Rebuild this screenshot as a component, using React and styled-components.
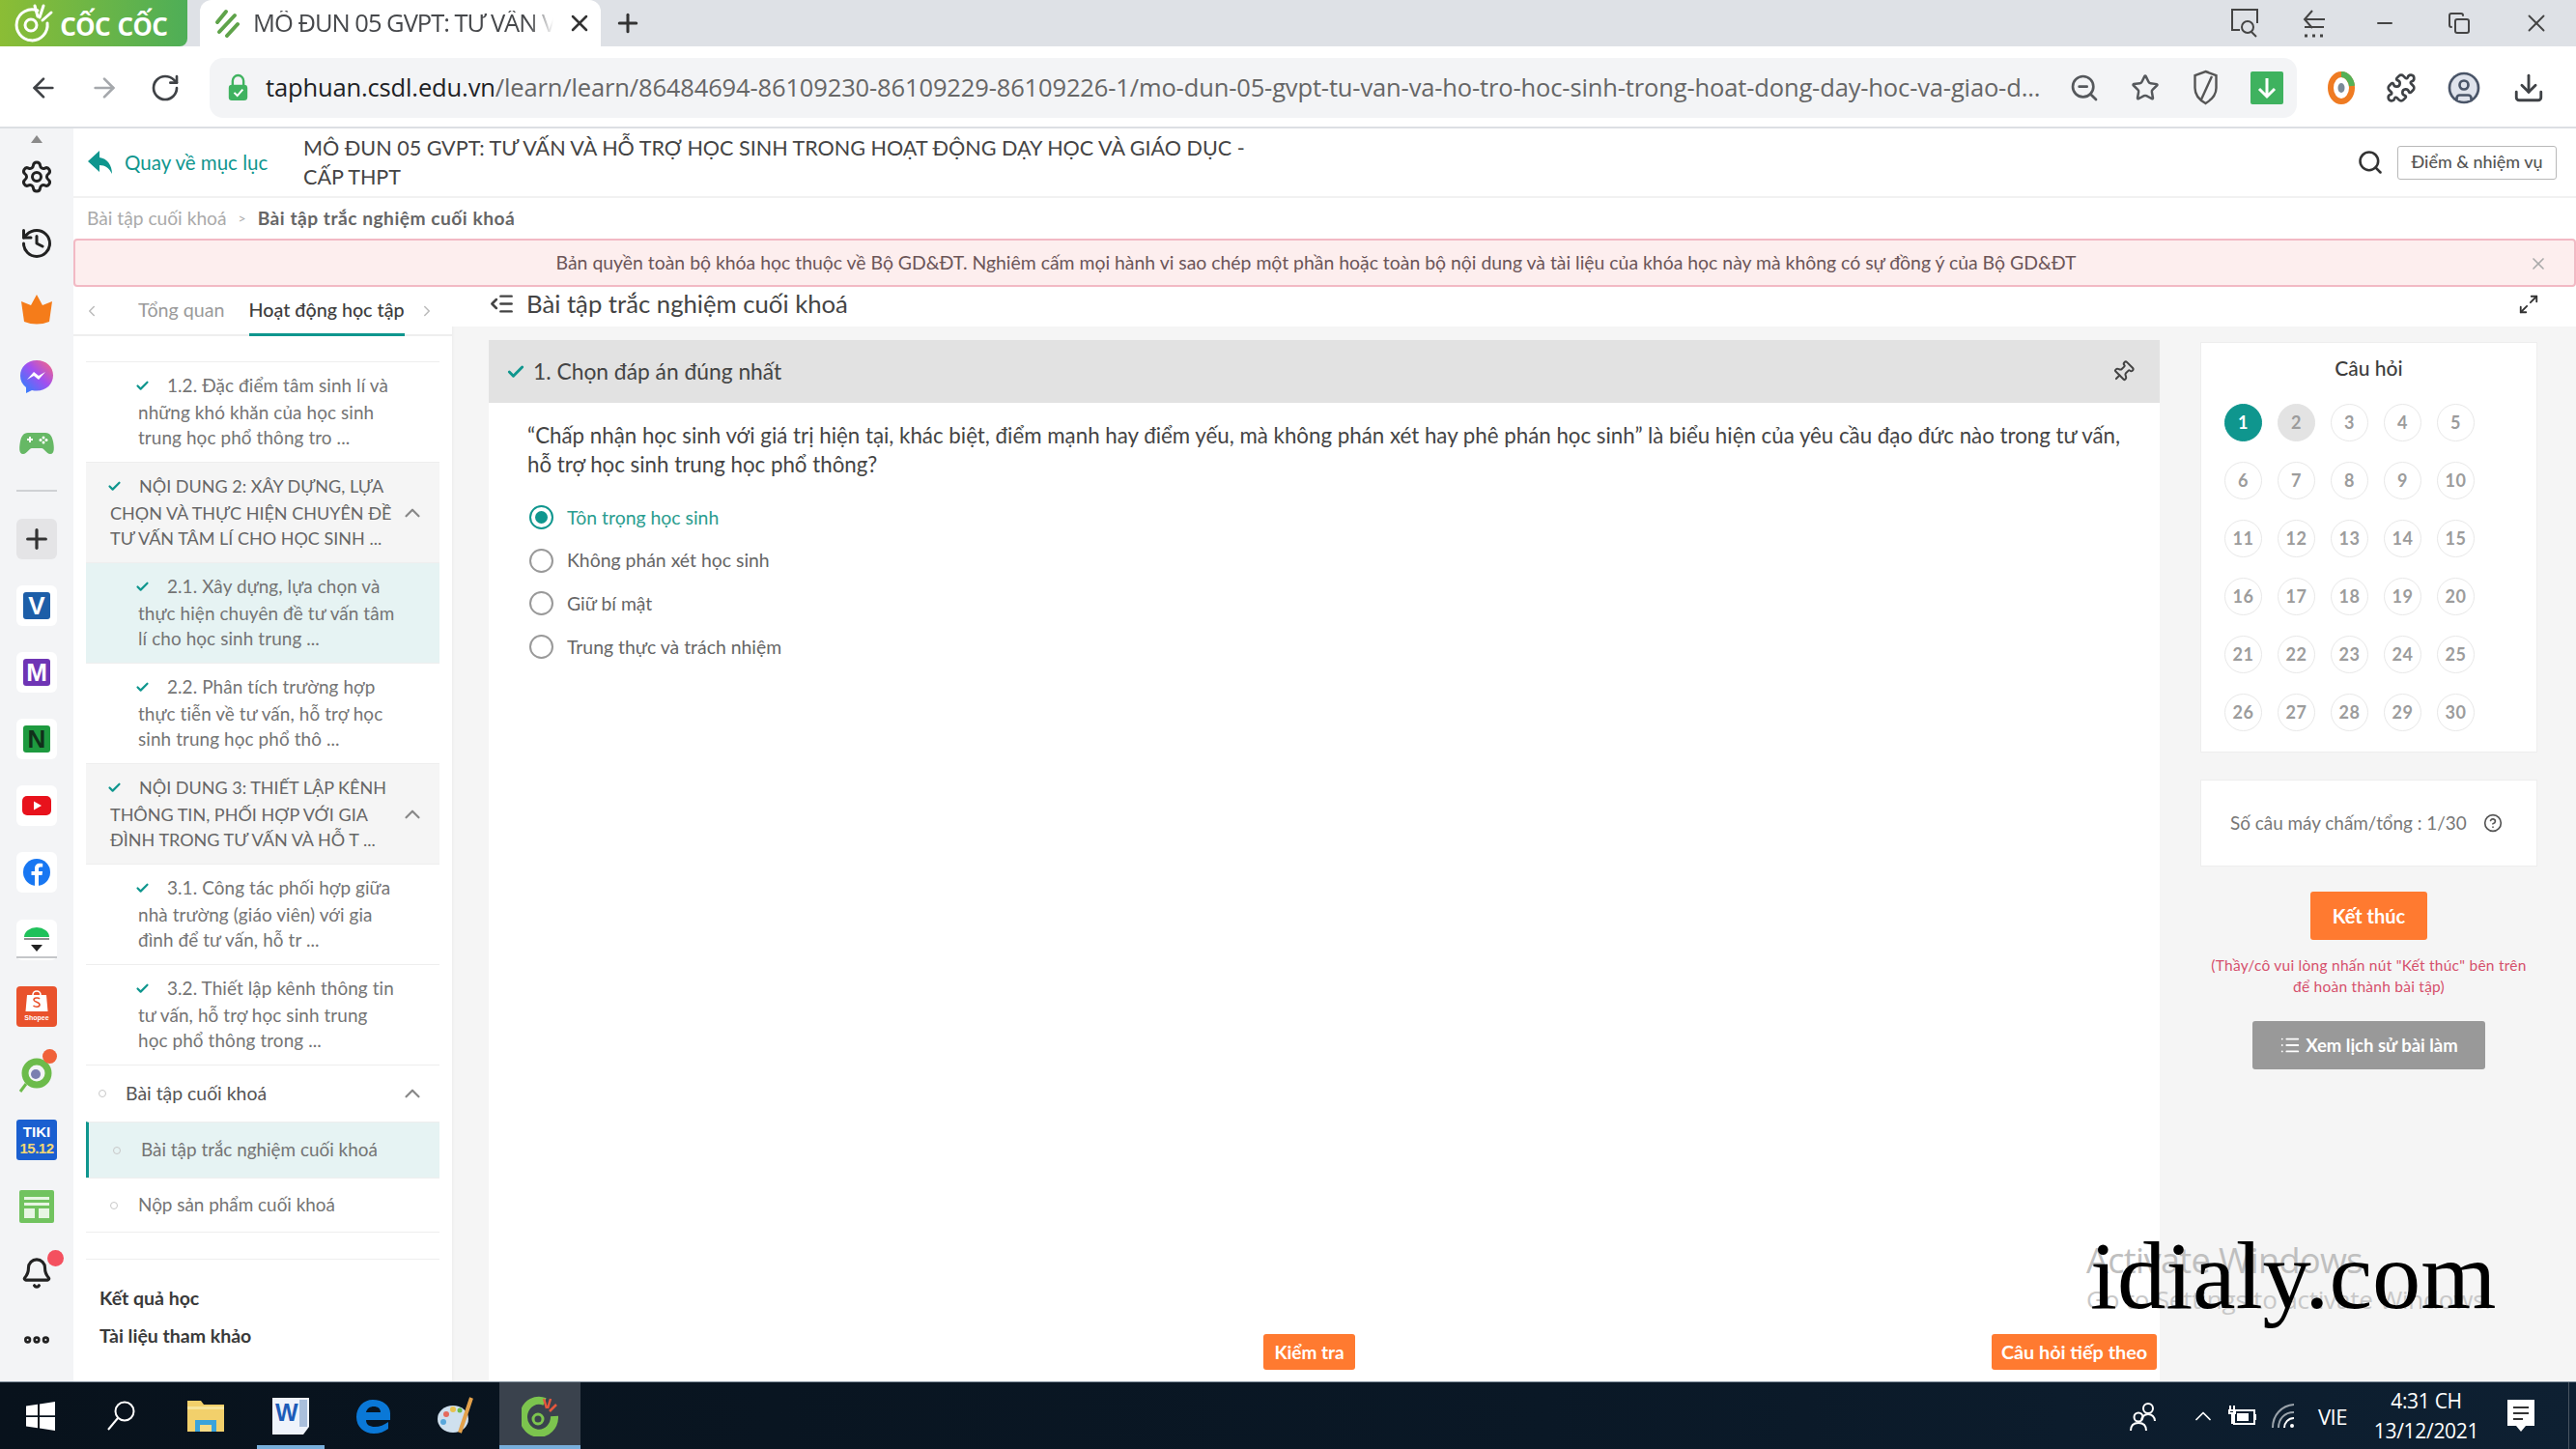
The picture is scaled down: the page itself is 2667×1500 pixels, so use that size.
import React from 'react';
import styled, { createGlobalStyle } from 'styled-components';
import { ArrowLeft, ArrowRight, RotateCw, ZoomOut, Star, Puzzle, CircleUser, Download, Settings, History, Plus, Search, Pin, Check, ChevronUp, ChevronLeft, ChevronRight, Maximize2, HelpCircle, X, Minus, Copy, IndentDecrease, List, MoreHorizontal, Bell } from 'lucide-react';

const UI = '"Lato","Open Sans","Noto Sans",sans-serif';
const CHROME = '"Open Sans","Noto Sans",sans-serif';
const TEAL = '#0f968e';

const Global = createGlobalStyle`
  html, body { margin: 0; padding: 0; background: #fff; }
  * { box-sizing: border-box; }
  body { font-family: ${UI}; color: #444; overflow: hidden; }
`;

const Screen = styled.div`
  position: relative; width: 2667px; height: 1500px; display: flex; flex-direction: column; overflow: hidden;
`;

/* browser chrome */
const TabBar = styled.div`
  height: 48px; flex: none; background: #dee1e6; display: flex; align-items: stretch; color: #3c4043;
`;
const Brand = styled.div`
  width: 194px; display: flex; align-items: center; gap: 6px; padding-left: 12px;
  background: linear-gradient(90deg, #8bbd35, #4eae57); border-radius: 0 0 8px 0;
  color: #fff; font: 600 34px/1 ${CHROME}; letter-spacing: -1px;
`;
const ActiveTab = styled.div`
  margin-left: 13px; width: 415px; background: #fff; border-radius: 12px 12px 0 0; display: flex; align-items: center; padding-left: 15px; position: relative;
`;
const TabTitle = styled.span`
  margin-left: 14px; width: 311px; white-space: nowrap; overflow: hidden; font: 400 25.5px/1 ${CHROME}; letter-spacing: -1px; color: #46484b;
  mask-image: linear-gradient(90deg, #000 92%, transparent 100%);
`;
const TabClose = styled.span` margin-left: 13px; display: flex; color: #333; `;
const NewTab = styled.span` margin-left: 13px; display: flex; align-items: center; color: #333; `;
const WinControls = styled.div`
  margin-left: auto; display: grid; grid-template-columns: 74px 70px 76px 78px 82px; justify-items: center; align-items: center; color: #444; width: 380px;
`;
const AddressRow = styled.div`
  height: 85px; flex: none; background: #fff; border-bottom: 2px solid #dcdfe3; display: flex; align-items: center; padding-top: 3px;
`;
const NavIcons = styled.div`
  width: 217px; display: grid; grid-template-columns: 62px 63px 63px; padding-left: 14px; justify-items: center; color: #3f4246;
`;
const Omni = styled.div`
  width: 2161px; height: 62px; background: #f3f4f6; border-radius: 14px; display: flex; align-items: center; padding-left: 19px; position: relative;
`;
const Url = styled.span`
  margin-left: 18px; width: 1838px; flex: none; font: 400 25.5px/1 ${CHROME}; letter-spacing: -0.14px; color: #666; white-space: nowrap;
  b { font-weight: 400; color: #202124; }
`;
const OmniIcons = styled.div`
  margin-left: 13px; display: grid; grid-template-columns: 63px 63px 63px 63px; justify-items: center; align-items: center; color: #55585c;
`;
const DlBox = styled.span`
  width: 34px; height: 34px; border-radius: 2px; background: #3fb25f; display: flex; align-items: center; justify-content: center; color: #fff;
`;
const ExtIcons = styled.div`
  margin-left: 15px; display: grid; grid-template-columns: 62px 62px 68px 66px; justify-items: center; align-items: center; color: #3f4246;
`;

/* body */
const Body = styled.div` flex: 1; min-height: 0; display: flex; `;
const Rail = styled.div`
  width: 76px; flex: none; background: #f3f4f6; display: flex; flex-direction: column; align-items: center; position: relative; padding-top: 7px;
`;
const RailCaret = styled.div`
  width: 0; height: 0; border: 6px solid transparent; border-bottom: 8px solid #8a8a8a; border-top: 0;
`;
const RailItem = styled.div`
  height: 69.1px; width: 100%; flex: none; display: flex; align-items: center; justify-content: center; position: relative; color: #222;
`;
const RailLine = styled.div`
  width: 42px; height: 2px; background: #cfd1d4; margin: ${p => p.$m};
`;
const UnderLine = styled.div`
  position: absolute; left: 17px; bottom: 15px; width: 42px; height: 2px; background: #c4c6c9;
`;
const PlusBox = styled.div`
  width: 42px; height: 42px; background: #e4e4e6; border-radius: 6px; display: flex; align-items: center; justify-content: center; color: #333;
`;
const Tile = styled.div`
  width: 42px; height: 42px; background: #fff; border-radius: 6px; display: flex; align-items: center; justify-content: center;
`;
const LetterTile = styled.span`
  width: 28px; height: 28px; background: ${p => p.$bg}; color: ${p => p.$fg || '#fff'}; border-radius: 3px; display: flex; align-items: center; justify-content: center;
  font: 700 26px/1 "Liberation Sans", sans-serif;
`;
const TikiTile = styled.span`
  width: 42px; height: 42px; background: #1a5fd0; border-radius: 3px; color: #fff; display: flex; flex-direction: column; align-items: center; justify-content: center;
  font: 700 15px/17px "Liberation Sans", sans-serif;
  i { font-style: normal; color: #f3d774; letter-spacing: -0.5px; }
`;
const ShopeeTile = styled.span`
  width: 42px; height: 42px; background: #e9522c; border-radius: 4px; color: #fff; display: flex; flex-direction: column; align-items: center; justify-content: flex-start; position: relative; padding-top: 3px; gap: 2px;
  font: 700 7px/1 "Liberation Sans", sans-serif;
`;
const RedDot = styled.span`
  position: absolute; right: ${p => p.$r}px; top: ${p => p.$t}px; width: ${p => p.$s}px; height: ${p => p.$s}px; border-radius: 50%; background: ${p => p.$c};
`;

const Page = styled.div` flex: 1; min-width: 0; display: flex; flex-direction: column; background: #fff; `;
const Header = styled.div`
  height: 72px; flex: none; border-bottom: 2px solid #f1f1f1; display: flex; align-items: center; padding: 0 20px 0 14px;
`;
const BackLink = styled.div`
  width: 224px; flex: none; display: flex; align-items: center; gap: 11px; color: ${TEAL}; font: 400 20.5px/1 ${UI};
`;
const CourseTitle = styled.div`
  width: 1000px; font: 400 21.55px/30px ${UI}; color: #444;
`;
const HeaderRight = styled.div` margin-left: auto; display: flex; align-items: center; gap: 14px; color: #333; `;
const GhostBtn = styled.div`
  width: 165px; height: 35px; border: 1.5px solid #b9b9b9; border-radius: 3px; display: flex; align-items: center; justify-content: center; font: 500 17.9px/1 ${UI}; color: #555;
`;
const Crumbs = styled.div`
  height: 42px; flex: none; display: flex; align-items: center; padding-left: 14px; font: 400 19.2px/1 ${UI}; color: #aaa; gap: 12px;
  b { font-weight: 700; color: #666; letter-spacing: .5px; }
  span { font-size: 14px; }
`;
const Banner = styled.div`
  height: 50px; flex: none; background: #fdeeee; border: 2px solid #f2b9c4; border-radius: 4px; display: flex; align-items: center; justify-content: center; position: relative;
  font: 400 19.4px/1 ${UI}; color: #6b5558; padding-right: 18px;
`;
const BannerClose = styled.span` position: absolute; right: 27px; top: 14px; color: #aaa; display: flex; `;
const Content = styled.div` flex: 1; min-height: 0; display: flex; background: #f5f5f5; `;

/* left column */
const LeftCol = styled.div`
  width: 392px; flex: none; background: #fff; display: flex; flex-direction: column; box-shadow: 1px 0 3px rgba(0,0,0,.04);
`;
const Tabs = styled.div`
  height: 51px; flex: none; border-bottom: 2px solid #eee; display: flex; align-items: stretch; position: relative; color: #aaa;
`;
const TabArrow = styled.span` display: flex; align-items: center; width: ${p => p.$w}px; justify-content: ${p => p.$j}; color: #bbb; `;
const TabItem = styled.span`
  display: flex; align-items: center; white-space: nowrap; height: 51px; font: ${p => p.$on ? 500 : 400} 19.7px/1 ${UI}; color: ${p => p.$on ? '#3d3d3d' : '#9a9a9a'};
  margin-left: ${p => p.$ml}px; border-bottom: 3px solid ${p => p.$on ? TEAL : 'transparent'};
`;
const Tree = styled.div` flex: 1; display: flex; flex-direction: column; padding: 26px 13px 0; `;
const TreeRow = styled.div`
  height: ${p => p.$h || 104}px; flex: none; border-top: 1px solid #eee; display: flex; align-items: center; position: relative;
  background: ${p => p.$bg || '#fff'};
  padding-left: ${p => p.$pl}px; font: 400 ${p => p.$fs || 18.9}px/26.4px ${UI}; letter-spacing: ${p => p.$ls || 0}px; color: ${p => p.$c || '#747474'}; white-space: nowrap;
  ${p => p.$bar && `border-left: 3px solid ${TEAL};`}
`;
const TickSlot = styled.span`
  display: inline-block; width: 33px; margin-left: -3px; color: ${TEAL}; vertical-align: -1px;
`;
const TreeChevron = styled.span` position: absolute; right: 15px; top: 50%; transform: translateY(-50%); display: flex; color: #888; `;
const Dot = styled.span`
  width: 8px; height: 8px; border-radius: 50%; border: 1.5px solid #c8c8c8; flex: none; margin-right: ${p => p.$mr}px;
`;
const TreeFoot = styled.div`
  margin-top: 27px; border-top: 1px solid #eee; padding: 28px 14px 0; display: flex; flex-direction: column; gap: 15px;
`;
const FootLink = styled.div` font: 700 19.5px/24px ${UI}; color: #3a3a3a; `;
const EndLine = styled.div` border-top: 1px solid #eee; `;

/* right of left */
const Work = styled.div` flex: 1; min-width: 0; display: flex; flex-direction: column; `;
const TitleBar = styled.div`
  height: 41px; flex: none; background: #fff; display: flex; align-items: center; padding: 0 38px 6px 38px; font: 400 25.7px/1 ${UI}; color: #444; gap: 12px;
`;
const ExpandIcon = styled.span` margin-left: auto; display: flex; color: #333; `;
const WorkBody = styled.div` flex: 1; min-height: 0; display: flex; padding: 14px 0 0 38px; `;
const Question = styled.div`
  width: 1730px; flex: none; background: #fff; display: flex; flex-direction: column;
`;
const QHead = styled.div`
  height: 65px; flex: none; background: #e2e2e2; display: flex; align-items: center; padding: 0 26px 0 18px; gap: 8px; font: 400 22.8px/1 ${UI}; color: #444;
`;
const QPin = styled.span` margin-left: auto; display: flex; color: #444; transform: rotate(45deg); `;
const QText = styled.div`
  padding: 19px 30px 0 40px; font: 400 22.3px/30px ${UI}; color: #444; white-space: nowrap;
`;
const Options = styled.div` margin-top: 17px; padding-left: 42px; display: flex; flex-direction: column; `;
const Option = styled.div`
  height: 44.7px; display: flex; align-items: center; gap: 14px; font: 400 19.4px/1 ${UI}; color: ${p => p.$on ? '#2a9d8f' : '#666'};
`;
const Radio = styled.span`
  width: 25px; height: 25px; border-radius: 50%; border: 2.5px solid ${p => p.$on ? TEAL : '#999'}; display: flex; align-items: center; justify-content: center;
  &::after { content: ''; width: 13px; height: 13px; border-radius: 50%; background: ${p => p.$on ? TEAL : 'transparent'}; }
`;
const QFoot = styled.div`
  margin-top: auto; height: 49px; flex: none; display: flex; align-items: flex-start; position: relative; padding-left: 802px;
`;
const OrangeBtn = styled.div`
  height: ${p => p.$h}px; width: ${p => p.$w}px; background: #ff7a30; border-radius: 3px; color: #fff; display: flex; align-items: center; justify-content: center; font: 700 ${p => p.$fs}px/1 ${UI};
`;
const NextWrap = styled.div` margin-left: auto; margin-right: 3px; `;

/* aside */
const Aside = styled.div` flex: 1; padding: 2px 40px 0 42px; display: flex; flex-direction: column; align-items: center; `;
const Card = styled.div`
  width: 349px; background: #fff; border: 1px solid #eee; flex: none;
`;
const CardTitle = styled.div`
  height: 52px; display: flex; align-items: center; justify-content: center; font: 500 21px/1 ${UI}; color: #3d3d3d; padding-bottom: 2px;
`;
const NumGrid = styled.div`
  display: grid; grid-template-columns: repeat(5, 55px); grid-auto-rows: 60px; padding: 0 0 11px 16px; justify-items: center; align-items: center;
`;
const Num = styled.span`
  width: 39px; height: 39px; border-radius: 50%; border: 1px solid ${p => p.$on ? TEAL : p.$seen ? '#e3e3e3' : '#e8e8e8'}; background: ${p => p.$on ? TEAL : p.$seen ? '#e3e3e3' : '#fff'};
  color: ${p => p.$on ? '#fff' : '#9c9c9c'}; display: flex; align-items: center; justify-content: center; font: 700 18px/1 ${UI}; letter-spacing: .5px;
`;
const ScoreCard = styled(Card)`
  margin-top: 28px; height: 90px; display: flex; align-items: center; padding-left: 30px; gap: 17px; font: 400 18.9px/1 ${UI}; color: #777; white-space: nowrap;
`;
const FinishBtn = styled(OrangeBtn)` margin-top: 26px; `;
const Note = styled.div`
  margin-top: 15px; text-align: center; color: #d5506c; font: 400 15.5px/22px ${UI}; white-space: nowrap; letter-spacing: .25px;
`;
const HistoryBtn = styled.div`
  margin-top: 25px; width: 241px; height: 50px; background: #999; border-radius: 3px; color: #fff; display: flex; align-items: center; justify-content: center; gap: 5px; font: 700 18.5px/1 ${UI};
`;

/* taskbar */
const Taskbar = styled.div`
  height: 70px; flex: none; background: linear-gradient(90deg, #08121c, #0a1826 60%, #0e2032); border-top: 1px solid #7d8b99; display: flex; align-items: stretch; color: #fff; position: relative;
  &::after { content: ''; position: absolute; right: 7px; top: 0; bottom: 0; width: 1px; background: #4a5561; }
`;
const TaskSlot = styled.div`
  width: ${p => p.$w}px; margin-left: ${p => p.$ml || 0}px; display: flex; align-items: center; justify-content: center; position: relative;
  background: ${p => p.$active ? '#3a424d' : 'transparent'};
  ${p => p.$under && `&::after { content:''; position:absolute; left:0; right:0; bottom:0; height:4px; background:#78aedb; }`}
`;
const Tray = styled.div`
  margin-left: auto; display: flex; align-items: center; color: #fff; font: 400 21px/1 ${CHROME};
`;
const Clock = styled.div`
  width: 130px; margin-left: 12px; text-align: center; font: 400 21px/31px ${CHROME}; letter-spacing: -.3px;
`;
const TraySlot = styled.span` width: ${p => p.$w}px; margin-left: ${p => p.$ml || 0}px; display: flex; justify-content: center; align-items: center; `;
const TrayLang = styled.span` width: 40px; text-align: center; margin-left: 10px; font-size: 22px; letter-spacing: -.5px; `;
const TrayEnd = styled.span` margin-left: 18px; margin-right: 42px; display: flex; `;

/* overlays */
const Activate = styled.div`
  position: absolute; left: 2160px; top: 1285px; font: 400 36px/40px ${CHROME}; color: #bfbfbf; letter-spacing: -.6px; white-space: nowrap;
  small { display: block; font-size: 26px; color: #c8c8c8; letter-spacing: -.2px; }
`;
const Watermark = styled.div`
  position: absolute; left: 2164px; top: 1263px; font: 400 100.5px/1.15 "Liberation Serif", serif; color: #000; white-space: nowrap;
`;

/* drawings */
const CocLogo = ({ s = 44, ring = '#fff', ray = '#fff' }) => (
  <svg width={s} height={s} viewBox="0 0 44 44" fill="none">
    <path d="M27 9A16 16 0 1 0 37 22" stroke={ring} strokeWidth={3} strokeLinecap="round" />
    <circle cx="20" cy="24" r="6" stroke={ring} strokeWidth="3" />
    <path d="M24 4l3 11M33 4l-4 12M41 11l-9 8" stroke={ray} strokeWidth="3" strokeLinecap="round" />
  </svg>
);
const Favicon = () => (
  <svg width="26" height="30" viewBox="0 0 26 30" fill="none" stroke="#5fa34a" strokeWidth="4" strokeLinecap="round">
    <path d="M3 14L12 3" /><path d="M5 24L21 7" /><path d="M13 28L24 16" />
  </svg>
);
const LockBadge = () => (
  <svg width="26" height="36" viewBox="0 0 26 36" fill="none">
    <path d="M6 15V9a7 7 0 0 1 14 0v6" stroke="#3fb25f" strokeWidth="3" />
    <rect x="1" y="14" width="24" height="20" rx="4" fill="#3fb25f" />
    <path d="M8 24l4 4 7-8" stroke="#fff" strokeWidth="2.5" fill="none" />
  </svg>
);
const SearchPage = () => (
  <svg width="30" height="32" viewBox="0 0 30 32" fill="none" stroke="#444" strokeWidth="2">
    <path d="M10 23H2V2h26v14" /><circle cx="18" cy="20" r="6" /><path d="M22 25l5 5" />
  </svg>
);
const BackDots = () => (
  <svg width="26" height="32" viewBox="0 0 26 32" fill="none" stroke="#444" strokeWidth="2">
    <path d="M24 12H3M11 3l-8 9 8 9M3 20h20" /><path d="M3 29h3M11 29h3M19 29h3" strokeWidth="3" />
  </svg>
);
const ShieldOff = () => (
  <svg width="25" height="40" viewBox="0 0 25 40" fill="none" stroke="#555" strokeWidth="2.4">
    <path d="M12.5 3l11 4v13c0 8-6 13-11 16C7 33 1.500 28 1.500 20V7z" /><path d="M19 8L8 32" />
  </svg>
);
const Donut = () => (
  <svg width="30" height="40" viewBox="0 0 30 40" fill="none">
    <ellipse cx="15" cy="20" rx="11" ry="14" stroke="#ef7b22" strokeWidth="6" />
    <path d="M15 6a11 14 0 0 1 11 12" stroke="#54b157" strokeWidth="6" />
    <ellipse cx="15" cy="20" rx="3.500" ry="5" fill="#7b8a98" />
  </svg>
);
const Crown = () => (
  <svg width="36" height="34" viewBox="0 0 36 34"><path d="M18 1l6 11 10-4-3 21q-13 5-26 0L2 8l10 4z" fill="#f57c1a" /></svg>
);
const Messenger = () => (
  <svg width="36" height="36" viewBox="0 0 36 36">
    <defs><linearGradient id="mg" x1="0" y1="1" x2="1" y2="0"><stop offset="0" stopColor="#1e88ff" /><stop offset=".55" stopColor="#a24ff0" /><stop offset="1" stopColor="#ff6a78" /></linearGradient></defs>
    <path d="M18 1C8 1 1 8 1 17c0 5 2 9 6 12v6l6-3c2 .5 3 .6 5 .6 10 0 17-7 17-16S28 1 18 1z" fill="url(#mg)" />
    <path d="M8 21l7-8 5 4 7-4-7 8-5-4z" fill="#fff" />
  </svg>
);
const Pad = () => (
  <svg width="38" height="24" viewBox="0 0 38 24">
    <path d="M10 1h18c5 0 7 4 8 9s2 13-3 13c-4 0-6-6-9-6H14c-3 0-5 6-9 6-5 0-4-8-3-13s3-9 8-9z" fill="#66b865" />
    <path d="M9 8h6M12 5v6" stroke="#fff" strokeWidth="2" /><circle cx="26" cy="6" r="1.500" fill="#fff" /><circle cx="26" cy="11" r="1.500" fill="#fff" /><circle cx="23" cy="8.500" r="1.500" fill="#fff" /><circle cx="29" cy="8.500" r="1.500" fill="#fff" />
  </svg>
);
const YouTube = () => (
  <svg width="30" height="20" viewBox="0 0 30 20"><rect width="30" height="20" rx="5" fill="#e8121c" /><path d="M12 5.500l8 4.500-8 4.500z" fill="#fff" /></svg>
);
const Facebook = () => (
  <svg width="28" height="28" viewBox="0 0 28 28"><circle cx="14" cy="14" r="14" fill="#1877f2" /><path d="M16 28V17h3.500l.6-4H16v-2.500c0-1.200.5-2 2-2h2.200V5c-1-.2-2-.3-3-.3-3.200 0-5.200 2-5.200 5.300V13H8.500v4H12v11z" fill="#fff" /></svg>
);
const GreenArc = () => (
  <svg width="30" height="30" viewBox="0 0 30 30"><path d="M2 12a13 10 0 0 1 26 0z" fill="#1fc15a" /><path d="M2 14h26" stroke="#222" strokeWidth="1" /><path d="M9 20h12l-6 7z" fill="#222" /></svg>
);
const Bag = () => (
  <svg width="26" height="24" viewBox="0 0 26 24" fill="none"><path d="M3 6h20l1.500 17h-23z" fill="#fff" /><path d="M9 6a4 4 0 0 1 8 0" stroke="#fff" strokeWidth="1.600" /><path d="M16 10c-1-1.500-6-1.500-6 1s6 2 6 5-5 2.500-6.500 1" stroke="#e9522c" strokeWidth="1.600" /></svg>
);
const CocColor = () => (
  <svg width="38" height="44" viewBox="0 0 38 44" fill="none">
    <circle cx="19" cy="22" r="12" stroke="#6cbb4b" strokeWidth="7" /><circle cx="18" cy="23" r="5" fill="#7b7fb0" />
    <path d="M8 33l-6 8" stroke="#6cbb4b" strokeWidth="3" />
  </svg>
);
const SheetIcon = () => (
  <svg width="36" height="34" viewBox="0 0 36 34"><rect width="36" height="34" rx="2" fill="#71c35f" /><rect x="5" y="7" width="26" height="3" fill="#e7f5e3" /><rect x="5" y="13" width="26" height="3" fill="#e7f5e3" /><rect x="5" y="19" width="11" height="10" fill="#e7f5e3" /><rect x="20" y="19" width="11" height="10" fill="#e7f5e3" /></svg>
);
const WinLogo = () => (
  <svg width="30" height="30" viewBox="0 0 30 30" fill="#fff"><path d="M0 4.500l12-1.700v11.500H0zM14 2.500L30 0v14.300H14zM0 16h12v11.300L0 25.500zM14 16h16v14l-16-2.400z" /></svg>
);
const Folder = () => (
  <svg width="38" height="36" viewBox="0 0 38 36"><path d="M0 2h14l3 4h21v28H0z" fill="#f2d06b" /><path d="M0 8h38v3H0z" fill="#f8e59b" /><path d="M8 34V22h22v12h-5v-7H13v7z" fill="#3aa3dc" /><rect x="13" y="27" width="12" height="7" fill="#f6dc87" /></svg>
);
const WordIcon = () => (
  <svg width="38" height="38" viewBox="0 0 38 38"><path d="M0 0h38v30l-6 8H0z" fill="#eef3fb" /><path d="M28 2h8v28h-8z" fill="#a9bfdc" /><text x="3" y="24" fontFamily="Liberation Sans" fontWeight="700" fontSize="25" fill="#1d5cb8">W</text></svg>
);
const EdgeIcon = () => (
  <svg width="36" height="38" viewBox="0 0 36 38"><path d="M18 2C8 2 1 10 1 20c0 10 8 17 18 17 6 0 11-2 15-5v-7c-4 3-9 5-14 5-5 0-9-2-9-7h25c.5-2 0-5 0-7C36 8 28 2 18 2zM11 15c1-4 4-6 8-6s7 2 7 6z" fill="#0a78d7" /></svg>
);
const Palette = () => (
  <svg width="40" height="42" viewBox="0 0 40 42"><ellipse cx="17" cy="24" rx="16" ry="14" fill="#cfe0ee" /><circle cx="10" cy="19" r="3" fill="#e56a5d" /><circle cx="17" cy="14" r="3" fill="#e8c14d" /><circle cx="7" cy="27" r="3" fill="#5aa8dc" /><circle cx="24" cy="15" r="2.500" fill="#6cbb4b" /><path d="M36 2L24 38" stroke="#e3a14a" strokeWidth="4" /></svg>
);
const CocTask = () => (
  <svg width="38" height="42" viewBox="0 0 38 42" fill="none">
    <path d="M24 6A16 17 0 1 0 34 21" stroke="#7cc44e" strokeWidth="8" /><circle cx="17" cy="24" r="5" stroke="#7cc44e" strokeWidth="3" />
    <path d="M23 3l3 10M30 3l-3 10M36 9l-7 7" stroke="#e4573d" strokeWidth="2.500" />
  </svg>
);
const People = () => (
  <svg width="30" height="32" viewBox="0 0 30 32" fill="none" stroke="#fff" strokeWidth="2"><circle cx="20" cy="8" r="5" /><path d="M13 21c0-4 3-7 7-7s7 3 7 7" /><circle cx="10" cy="17" r="4.500" /><path d="M2 31c0-5 3-8 8-8s8 3 8 8" /></svg>
);
const Battery = () => (
  <svg width="30" height="24" viewBox="0 0 30 24" fill="none" stroke="#fff" strokeWidth="2"><rect x="6" y="6" width="21" height="14" /><rect x="9" y="9" width="12" height="8" fill="#fff" stroke="none" /><path d="M28 10v6" /><path d="M2 1v5M6 1v5M1 6h6v3H1zM4 9v10h3" /></svg>
);
const Wifi = () => (
  <svg width="26" height="28" viewBox="0 0 26 28" fill="none" stroke="#9aa3ab" strokeWidth="2"><path d="M2 26C2 13 11 3 24 2" /><path d="M8 26c0-9 6-16 16-16" /><path d="M14 26c0-5 4-10 10-10" stroke="#fff" /><circle cx="22" cy="24" r="2" fill="#fff" stroke="none" /></svg>
);
const NoticeIcon = () => (
  <svg width="30" height="36" viewBox="0 0 30 36"><path d="M1 1h28v27H20l-5 6-5-6H1z" fill="#fff" /><path d="M7 9h16M7 15h16M7 21h10" stroke="#333" strokeWidth="2" /></svg>
);
const ArrowDownGlyph = () => (
  <svg width="22" height="24" viewBox="0 0 22 24" fill="none" stroke="#fff" strokeWidth="3"><path d="M11 2v19M3 13l8 8 8-8" /></svg>
);

const tree = [
  { kind: 'sub', lines: ['1.2. Đặc điểm tâm sinh lí và', 'những khó khăn của học sinh', 'trung học phổ thông tro ...'] },
  { kind: 'sec', lines: ['NỘI DUNG 2: XÂY DỰNG, LỰA', 'CHỌN VÀ THỰC HIỆN CHUYÊN ĐỀ', 'TƯ VẤN TÂM LÍ CHO HỌC SINH ...'] },
  { kind: 'sub', on: true, lines: ['2.1. Xây dựng, lựa chọn và', 'thực hiện chuyên đề tư vấn tâm', 'lí cho học sinh trung ...'] },
  { kind: 'sub', lines: ['2.2. Phân tích trường hợp', 'thực tiễn về tư vấn, hỗ trợ học', 'sinh trung học phổ thô ...'] },
  { kind: 'sec', lines: ['NỘI DUNG 3: THIẾT LẬP KÊNH', 'THÔNG TIN, PHỐI HỢP VỚI GIA', 'ĐÌNH TRONG TƯ VẤN VÀ HỖ T ...'] },
  { kind: 'sub', lines: ['3.1. Công tác phối hợp giữa', 'nhà trường (giáo viên) với gia', 'đình để tư vấn, hỗ tr ...'] },
  { kind: 'sub', lines: ['3.2. Thiết lập kênh thông tin', 'tư vấn, hỗ trợ học sinh trung', 'học phổ thông trong ...'] },
];

const nums = Array.from({ length: 30 }, (_, i) => i + 1);
const options = ['Tôn trọng học sinh', 'Không phán xét học sinh', 'Giữ bí mật', 'Trung thực và trách nhiệm'];

export default function App() {
  return (
    <Screen>
      <Global />
      <TabBar>
        <Brand><CocLogo />cốc cốc</Brand>
        <ActiveTab>
          <Favicon />
          <TabTitle>MÔ ĐUN 05 GVPT: TƯ VẤN VÀ HỖ TRỢ</TabTitle>
          <TabClose><X size={28} strokeWidth={2.2} /></TabClose>
        </ActiveTab>
        <NewTab><Plus size={30} strokeWidth={2.4} /></NewTab>
        <WinControls>
          <SearchPage /><BackDots /><Minus size={24} /><Copy size={24} /><X size={30} strokeWidth={1.5} />
        </WinControls>
      </TabBar>
      <AddressRow>
        <NavIcons>
          <ArrowLeft size={32} strokeWidth={2} />
          <ArrowRight size={32} strokeWidth={2} color="#a5a8ac" />
          <RotateCw size={32} strokeWidth={2} />
        </NavIcons>
        <Omni>
          <LockBadge />
          <Url><b>taphuan.csdl.edu.vn</b>/learn/learn/86484694-86109230-86109229-86109226-1/mo-dun-05-gvpt-tu-van-va-ho-tro-hoc-sinh-trong-hoat-dong-day-hoc-va-giao-d...</Url>
          <OmniIcons>
            <ZoomOut size={32} strokeWidth={2} />
            <Star size={30} strokeWidth={2} />
            <ShieldOff />
            <DlBox><ArrowDownGlyph /></DlBox>
          </OmniIcons>
        </Omni>
        <ExtIcons>
          <Donut />
          <Puzzle size={32} strokeWidth={2} />
          <CircleUser size={36} strokeWidth={1.8} color="#4a5568" fill="#dfe3ec" />
          <Download size={34} strokeWidth={2} />
        </ExtIcons>
      </AddressRow>
      <Body>
        <Rail>
          <RailCaret />
          <RailItem><Settings size={36} strokeWidth={2} /></RailItem>
          <RailItem><History size={36} strokeWidth={2} /></RailItem>
          <RailItem><Crown /></RailItem>
          <RailItem><Messenger /></RailItem>
          <RailItem><Pad /></RailItem>
          <RailLine $m="14px 0" />
          <RailItem><PlusBox><Plus size={32} strokeWidth={2.4} /></PlusBox></RailItem>
          <RailItem><Tile><LetterTile $bg="#1d5ea8">V</LetterTile></Tile></RailItem>
          <RailItem><Tile><LetterTile $bg="#6f35b5">M</LetterTile></Tile></RailItem>
          <RailItem><Tile><LetterTile $bg="#1e9a3f" $fg="#10301a">N</LetterTile></Tile></RailItem>
          <RailItem><Tile><YouTube /></Tile></RailItem>
          <RailItem><Tile><Facebook /></Tile></RailItem>
          <RailItem><Tile><GreenArc /></Tile><UnderLine /></RailItem>
          <RailItem><ShopeeTile><Bag />Shopee</ShopeeTile></RailItem>
          <RailItem><CocColor /><RedDot $r={17} $t={10} $s={15} $c="#f0623a" /></RailItem>
          <RailItem><TikiTile>TIKI<i>15.12</i></TikiTile></RailItem>
          <RailItem><SheetIcon /></RailItem>
          <RailItem><Bell size={34} strokeWidth={2.2} /><RedDot $r={10} $t={10} $s={17} $c="#f4505f" /></RailItem>
          <RailItem><MoreHorizontal size={32} strokeWidth={3.500} /></RailItem>
        </Rail>
        <Page>
          <Header>
            <BackLink>
              <svg width="28" height="26" viewBox="0 0 28 26"><path d="M13 1L1 12l12 11v-7c6 0 10 3 13 9 0-9-5-16-13-17z" fill={TEAL} /></svg>
              Quay về mục lục
            </BackLink>
            <CourseTitle>MÔ ĐUN 05 GVPT: TƯ VẤN VÀ HỖ TRỢ HỌC SINH TRONG HOẠT ĐỘNG DẠY HỌC VÀ GIÁO DỤC - CẤP THPT</CourseTitle>
            <HeaderRight>
              <Search size={28} strokeWidth={2.2} />
              <GhostBtn>Điểm &amp; nhiệm vụ</GhostBtn>
            </HeaderRight>
          </Header>
          <Crumbs>Bài tập cuối khoá<span>&gt;</span><b>Bài tập trắc nghiệm cuối khoá</b></Crumbs>
          <Banner>
            Bản quyền toàn bộ khóa học thuộc về Bộ GD&amp;ĐT. Nghiêm cấm mọi hành vi sao chép một phần hoặc toàn bộ nội dung và tài liệu của khóa học này mà không có sự đồng ý của Bộ GD&amp;ĐT
            <BannerClose><X size={20} /></BannerClose>
          </Banner>
          <Content>
            <LeftCol>
              <Tabs>
                <TabArrow $w={28} $j="flex-end"><ChevronLeft size={18} /></TabArrow>
                <TabItem $ml={39}>Tổng quan</TabItem>
                <TabItem $on $ml={25}>Hoạt động học tập</TabItem>
                <TabArrow $w={32} $j="flex-end"><ChevronRight size={18} /></TabArrow>
              </Tabs>
              <Tree>
                {tree.map((r, i) => (
                  <TreeRow key={i} $pl={r.kind === 'sub' ? 54 : 25} $fs={r.kind === 'sec' ? 18 : 18.9} $ls={r.kind === 'sec' ? 0 : 0.1} $bg={r.on ? '#e6f3f3' : r.kind === 'sec' ? '#f5f5f5' : '#fff'} $c={r.kind === 'sec' ? '#666' : '#747474'}>
                    <div>
                      <TickSlot><Check size={15} strokeWidth={3.500} /></TickSlot>{r.lines[0]}<br />{r.lines[1]}<br />{r.lines[2]}
                    </div>
                    {r.kind === 'sec' && <TreeChevron><ChevronUp size={26} strokeWidth={2} /></TreeChevron>}
                  </TreeRow>
                ))}
                <TreeRow $h={59} $pl={13} $c="#555" $fs={19.4}>
                  <Dot $mr={20} />Bài tập cuối khoá
                  <TreeChevron><ChevronUp size={26} strokeWidth={2} /></TreeChevron>
                </TreeRow>
                <TreeRow $h={58} $pl={25} $bar $bg="#e6f3f3">
                  <Dot $mr={21} />Bài tập trắc nghiệm cuối khoá
                </TreeRow>
                <TreeRow $h={56} $pl={25}>
                  <Dot $mr={21} />Nộp sản phẩm cuối khoá
                </TreeRow>
                <EndLine />
                <TreeFoot>
                  <FootLink>Kết quả học</FootLink>
                  <FootLink>Tài liệu tham khảo</FootLink>
                </TreeFoot>
              </Tree>
            </LeftCol>
            <Work>
              <TitleBar>
                <IndentDecrease size={27} strokeWidth={2.2} />
                Bài tập trắc nghiệm cuối khoá
                <ExpandIcon><Maximize2 size={22} strokeWidth={2} /></ExpandIcon>
              </TitleBar>
              <WorkBody>
                <Question>
                  <QHead>
                    <Check size={20} strokeWidth={3.500} color={TEAL} />
                    1. Chọn đáp án đúng nhất
                    <QPin><Pin size={24} strokeWidth={2} /></QPin>
                  </QHead>
                  <QText>
                    “Chấp nhận học sinh với giá trị hiện tại, khác biệt, điểm mạnh hay điểm yếu, mà không phán xét hay phê phán học sinh” là biểu hiện của yêu cầu đạo đức nào trong tư vấn,<br />
                    hỗ trợ học sinh trung học phổ thông?
                  </QText>
                  <Options>
                    {options.map((o, i) => (
                      <Option key={o} $on={i === 0}><Radio $on={i === 0} />{o}</Option>
                    ))}
                  </Options>
                  <QFoot>
                    <OrangeBtn $w={95} $h={37} $fs={19}>Kiểm tra</OrangeBtn>
                    <NextWrap><OrangeBtn $w={171} $h={37} $fs={19.8}>Câu hỏi tiếp theo</OrangeBtn></NextWrap>
                  </QFoot>
                </Question>
                <Aside>
                  <Card>
                    <CardTitle>Câu hỏi</CardTitle>
                    <NumGrid>
                      {nums.map(n => <Num key={n} $on={n === 1} $seen={n === 2}>{n}</Num>)}
                    </NumGrid>
                  </Card>
                  <ScoreCard>Số câu máy chấm/tổng : 1/30 <HelpCircle size={20} strokeWidth={2} color="#555" /></ScoreCard>
                  <FinishBtn $w={121} $h={50} $fs={20}>Kết thúc</FinishBtn>
                  <Note>(Thầy/cô vui lòng nhấn nút "Kết thúc" bên trên<br />để hoàn thành bài tập)</Note>
                  <HistoryBtn><List size={22} strokeWidth={2} />Xem lịch sử bài làm</HistoryBtn>
                </Aside>
              </WorkBody>
            </Work>
          </Content>
        </Page>
      </Body>
      <Taskbar>
        <TaskSlot $w={84}><WinLogo /></TaskSlot>
        <TaskSlot $w={82}><svg width="30" height="32" viewBox="0 0 30 32" fill="none" stroke="#fff" strokeWidth="2"><circle cx="19" cy="11" r="9.500" /><path d="M12 18L2 30" /></svg></TaskSlot>
        <TaskSlot $w={94}><Folder /></TaskSlot>
        <TaskSlot $w={70} $ml={6} $under><WordIcon /></TaskSlot>
        <TaskSlot $w={100}><EdgeIcon /></TaskSlot>
        <TaskSlot $w={72}><Palette /></TaskSlot>
        <TaskSlot $w={84} $ml={9} $active $under><CocTask /></TaskSlot>
        <Tray>
          <TraySlot $w={40}><People /></TraySlot>
          <TraySlot $w={40} $ml={22}><ChevronUp size={28} strokeWidth={1.500} /></TraySlot>
          <TraySlot $w={42}><Battery /></TraySlot>
          <TraySlot $w={42}><Wifi /></TraySlot>
          <TrayLang>VIE</TrayLang>
          <Clock>4:31 CH<br />13/12/2021</Clock>
          <TrayEnd><NoticeIcon /></TrayEnd>
        </Tray>
      </Taskbar>
      <Activate>Activate Windows<small>Go to Settings to activate Windows.</small></Activate>
      <Watermark>idialy.com</Watermark>
    </Screen>
  );
}
